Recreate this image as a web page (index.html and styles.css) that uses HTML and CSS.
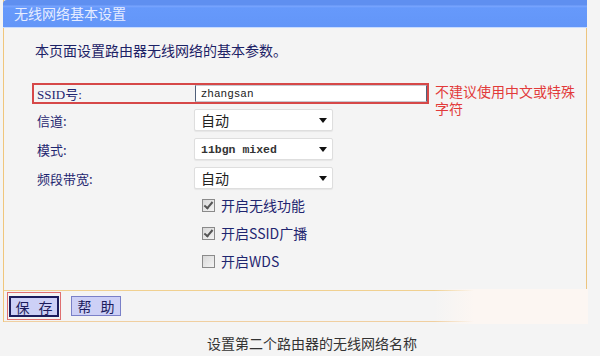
FILE: index.html
```html
<!DOCTYPE html>
<html lang="zh-CN">
<head>
    <meta charset="UTF-8">
    <meta name="viewport" content="width=device-width, initial-scale=1.0">
    <title>无线网络基本设置</title>
    <link rel="stylesheet" href="styles.css">
</head>
<body>
    <div class="panel">
        <div class="title-bar">无线网络基本设置</div>

        <div class="content">
            <p class="desc">本页面设置路由器无线网络的基本参数。</p>

            <div class="ssid-line">
                <div class="row ssid-box">
                    <label class="label">SSID号:</label>
                    <input class="text-input" type="text" value="zhangsan">
                </div>
                <div class="hint">不建议使用中文或特殊<br>字符</div>
            </div>

            <div class="row">
                <span class="label">信道:</span>
                <div class="select"><span class="select-text">自动</span><span class="arrow"></span></div>
            </div>
            <div class="row">
                <span class="label">模式:</span>
                <div class="select"><span class="select-text mono">11bgn mixed</span><span class="arrow"></span></div>
            </div>
            <div class="row">
                <span class="label">频段带宽:</span>
                <div class="select"><span class="select-text">自动</span><span class="arrow"></span></div>
            </div>

            <div class="checks">
                <div class="check-row"><span class="checkbox checked"></span>开启无线功能</div>
                <div class="check-row"><span class="checkbox checked"></span>开启SSID广播</div>
                <div class="check-row"><span class="checkbox"></span>开启WDS</div>
            </div>
        </div>

        <div class="footer">
            <div class="btn-focus"><button class="btn btn-save">保 存</button></div>
            <button class="btn">帮 助</button>
            <div class="smudge"></div>
        </div>
    </div>

    <p class="caption">设置第二个路由器的无线网络名称</p>
</body>
</html>
```

FILE: styles.css
```css
body {
    margin: 0;
    background-color: #f4f4f4;
    font-family: "Noto Sans CJK SC", "Noto Sans", sans-serif;
    width: 600px;
    height: 356px;
    overflow: hidden;
}
.panel {
    width: 582px;
    margin-left: 3px;
    border-left: 1px solid #f0c67c;
    border-right: 1px solid #ecc47e;
    position: relative;
}
.title-bar {
    height: 27px;
    line-height: 27px;
    margin-left: -1px;
    margin-right: -1px;
    padding-left: 11px;
    background: linear-gradient(to bottom, #5f8ff0 0, #5f8ff0 5px, #7aa6ff 6px, #6699fb 8px, #6396f8 26px);
    border-bottom: 1px solid #c8dcff;
    border-top-left-radius: 4px;
    color: #e6ecff;
    font-size: 14px;
}
.content {
    padding-bottom: 15px;
}
.desc {
    margin: 0;
    padding: 12px 0 0 31px;
    height: 43px;
    line-height: 20px;
    font-size: 14px;
    color: #1c2266;
}
.ssid-line {
    display: flex;
    align-items: flex-start;
    height: 21px;
    margin-left: 28px;
    margin-bottom: 5px;
}
.row {
    display: flex;
    align-items: center;
    height: 22px;
    margin-bottom: 7px;
    padding-left: 33px;
}
.label {
    width: 157px;
    font-size: 13px;
    color: #1f2670;
}
.ssid-box {
    box-sizing: border-box;
    width: 397px;
    height: 21px;
    margin-bottom: 0;
    padding-left: 3px;
    border: 2px solid #d64848;
}
.ssid-box .label {
    width: 159px;
    font-family: "Liberation Serif", "Noto Sans CJK SC", serif;
}
.text-input {
    box-sizing: border-box;
    width: 234px;
    height: 17px;
    margin: 0;
    padding: 0 0 0 5px;
    border: 1px solid #c8c8d0;
    border-left: 1px solid #50607a;
    border-right: 1px solid #50607a;
    background: white;
    font-family: "Liberation Mono", monospace;
    font-size: 11px;
    color: #222;
    outline: none;
}
.hint {
    margin-left: 6px;
    margin-top: 0;
    font-size: 14px;
    line-height: 17px;
    color: #e23a3a;
}
.select {
    box-sizing: border-box;
    width: 139px;
    height: 22px;
    display: flex;
    align-items: center;
    justify-content: space-between;
    padding: 0 5px 0 6px;
    background: white;
    border: 1px solid #dedede;
    border-radius: 2px;
    box-shadow: 0 1px 1px rgba(0,0,0,0.06);
}
.select-text {
    font-size: 14px;
    color: #222;
}
.select-text.mono {
    font-family: "Liberation Mono", monospace;
    font-size: 11.5px;
    font-weight: bold;
    color: #333;
}
.arrow {
    width: 0;
    height: 0;
    border-left: 4px solid transparent;
    border-right: 4px solid transparent;
    border-top: 5px solid #111;
}
.checks {
    margin-top: -5px;
    padding-left: 198px;
}
.check-row {
    display: flex;
    align-items: center;
    height: 28px;
    font-size: 14px;
    color: #1f2670;
}
.checkbox {
    box-sizing: border-box;
    width: 13px;
    height: 13px;
    margin-right: 6px;
    border: 1px solid #8a8a8a;
    background: linear-gradient(135deg, #d8d8d8, #f4f4f4);
    position: relative;
}
.checkbox.checked::after {
    content: "";
    position: absolute;
    left: 3px;
    top: 0px;
    width: 3px;
    height: 7px;
    border-right: 2px solid #555;
    border-bottom: 2px solid #555;
    transform: rotate(40deg);
}
.footer {
    display: flex;
    align-items: center;
    gap: 10px;
    height: 30px;
    padding-left: 3px;
    border-top: 1px solid #f0d090;
    border-bottom: 1px solid #f0cfa0;
    position: relative;
}
.btn-focus {
    padding: 1px;
    border: 1px solid #e07070;
}
.btn {
    height: 20px;
    width: 50px;
    padding: 0 0 0 3px;
    border: 1px solid #7a80c8;
    background-color: #cdd0f6;
    color: #1c1c5c;
    font-family: "Noto Sans CJK SC", sans-serif;
    font-size: 14px;
    line-height: 18px;
    letter-spacing: 3px;
}
.btn-save {
    border: 2px solid #1c1c5c;
    height: 21px;
}
.smudge {
    position: absolute;
    left: 430px;
    right: -2px;
    top: -2px;
    bottom: -3px;
    background: linear-gradient(to right, rgba(252,246,242,0), #fcf6f2 40px);
}
.caption {
    margin: 11px 0 0;
    padding-left: 24px;
    text-align: center;
    font-size: 14px;
    color: #333;
}
```
